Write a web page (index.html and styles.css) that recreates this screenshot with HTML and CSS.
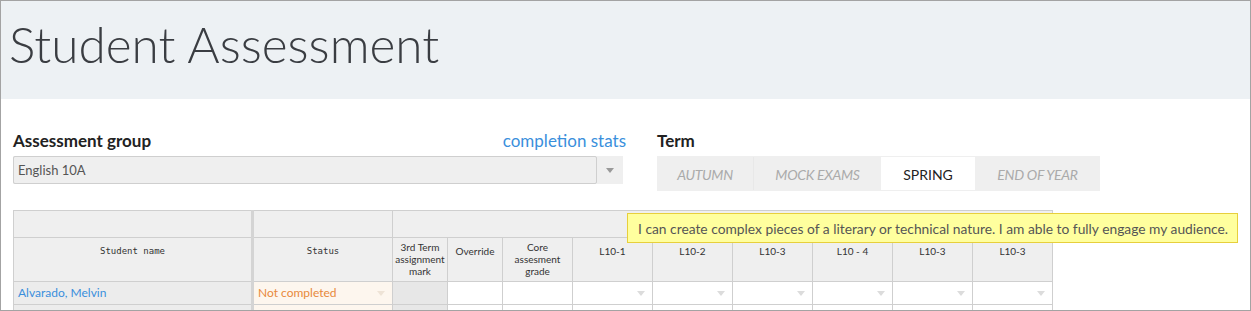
FILE: index.html
```html
<!DOCTYPE html>
<html lang="en">
<head>
    <meta charset="UTF-8">
    <title>Student Assessment</title>
    <link rel="stylesheet" href="styles.css">
</head>
<body>
    <div class="frame">
        <header class="page-header">
            <h1>Student Assessment</h1>
        </header>

        <section class="filters">
            <div class="group">
                <div class="label-row">
                    <span class="label">Assessment group</span>
                    <a class="stats-link" href="#">completion stats</a>
                </div>
                <div class="select">
                    <div class="select-value">English 10A</div>
                    <div class="select-arrow"><span class="caret"></span></div>
                </div>
            </div>
            <div class="term">
                <div class="label-row">
                    <span class="label">Term</span>
                </div>
                <div class="tabs">
                    <span class="tab autumn">AUTUMN</span>
                    <span class="tab mock">MOCK EXAMS</span>
                    <span class="tab spring active">SPRING</span>
                    <span class="tab year">END OF YEAR</span>
                </div>
            </div>
        </section>

        <section class="grid-wrap">
            <table class="grid">
                <colgroup>
                    <col style="width: 239px">
                    <col style="width: 140px">
                    <col style="width: 55px">
                    <col style="width: 55px">
                    <col style="width: 70px">
                    <col style="width: 80px">
                    <col style="width: 80px">
                    <col style="width: 80px">
                    <col style="width: 80px">
                    <col style="width: 80px">
                    <col style="width: 80px">
                </colgroup>
                <tr class="top-row">
                    <th></th>
                    <th class="thick"></th>
                    <th colspan="9"></th>
                </tr>
                <tr class="head-row">
                    <th class="mono">Student name</th>
                    <th class="mono thick">Status</th>
                    <th class="multi">3rd Term assignment mark</th>
                    <th>Override</th>
                    <th class="multi">Core assesment grade</th>
                    <th>L10-1</th>
                    <th>L10-2</th>
                    <th>L10-3</th>
                    <th>L10 - 4</th>
                    <th>L10-3</th>
                    <th>L10-3</th>
                </tr>
                <tr class="data-row">
                    <td class="name"><a href="#">Alvarado, Melvin</a></td>
                    <td class="status thick">Not completed<span class="caret"></span></td>
                    <td class="mark"></td>
                    <td></td>
                    <td></td>
                    <td class="pick"><span class="caret"></span></td>
                    <td class="pick"><span class="caret"></span></td>
                    <td class="pick"><span class="caret"></span></td>
                    <td class="pick"><span class="caret"></span></td>
                    <td class="pick"><span class="caret"></span></td>
                    <td class="pick"><span class="caret"></span></td>
                </tr>
                <tr class="data-row">
                    <td class="name"></td>
                    <td class="status thick"></td>
                    <td class="mark"></td>
                    <td></td><td></td><td></td><td></td><td></td><td></td><td></td><td></td>
                </tr>
            </table>

            <div class="tooltip">I can create complex pieces of a literary or technical nature. I am able to fully engage my audience.</div>
        </section>
    </div>
</body>
</html>
```

FILE: styles.css
```css
* {
    margin: 0;
    padding: 0;
    box-sizing: border-box;
}

body {
    font-family: 'Lato', sans-serif;
    color: #333;
    background-color: #fff;
}

.frame {
    width: 1251px;
    height: 311px;
    border: 1px solid #a3a3a3;
    overflow: hidden;
}

/* Header */
.page-header {
    background-color: #edf1f4;
    height: 98px;
    padding: 13px 0 0 8px;
}

.page-header h1 {
    font-size: 49.5px;
    font-weight: 300;
    color: #3a3d42;
    line-height: 60px;
}

/* Filters */
.filters {
    display: flex;
    gap: 30px;
    padding: 31px 0 0 12px;
}

.group {
    width: 614px;
}

.label-row {
    display: flex;
    justify-content: space-between;
    align-items: baseline;
    height: 26px;
}

.label {
    font-size: 17px;
    font-weight: 700;
    color: #222;
}

.stats-link {
    color: #3a8fdc;
    font-size: 17px;
    text-decoration: none;
    margin-right: 1px;
}

.select {
    display: flex;
    height: 28px;
    margin-right: 4px;
    background-color: #efefef;
}

.select-value {
    flex: 1;
    border: 1px solid #cfcfcf;
    border-radius: 2px;
    font-size: 13px;
    color: #555;
    padding: 5px 4px;
}

.select-arrow {
    width: 26px;
    display: flex;
    align-items: center;
    justify-content: center;
}

.caret {
    display: inline-block;
    width: 0;
    height: 0;
    border-left: 4px solid transparent;
    border-right: 4px solid transparent;
    border-top: 5px solid #999;
}

.tabs {
    display: flex;
    background-color: #efefef;
    width: 443px;
    height: 35px;
    padding: 1px 0;
}

.tab {
    flex-shrink: 0;
    white-space: nowrap;
    text-align: center;
    padding-top: 9px;
    font-size: 14px;
    font-style: italic;
    letter-spacing: -0.3px;
    color: #aaa;
}

.tab.autumn {
    width: 97px;
    border-right: 1px solid #e8e8e8;
}

.tab.mock {
    width: 127px;
}

.tab.spring {
    width: 94px;
}

.tab.year {
    width: 125px;
}

.tab.active {
    background-color: #fff;
    color: #222;
    font-style: normal;
    letter-spacing: 0;
}

/* Grid */
.grid-wrap {
    position: relative;
    padding: 19px 0 0 12px;
}

.grid {
    border-collapse: collapse;
    table-layout: fixed;
    width: 1039px;
}

.grid th,
.grid td {
    border: 1px solid #cfcfcf;
}

.grid th {
    background-color: #efefef;
    font-size: 10px;
    font-weight: 400;
    color: #333;
    vertical-align: top;
    line-height: 12px;
}

.top-row th {
    height: 26.5px;
}

.head-row th {
    height: 44px;
    padding-top: 7px;
}

.head-row th.multi {
    padding-top: 3px;
}

.grid th.mono {
    font-family: 'DejaVu Sans Mono', monospace;
    font-size: 9px;
}

.grid .thick {
    border-left: 3px solid #d4d4d4;
}

.data-row td {
    height: 23px;
    font-size: 12px;
    position: relative;
    padding: 0 4px;
}

.data-row td .caret {
    position: absolute;
    right: 7px;
    top: 9px;
    border-top-color: #dcdcdc;
}

.data-row .name {
    background-color: #ececec;
}

.data-row .name a {
    color: #3a8fdc;
    text-decoration: none;
}

.data-row .status {
    background-color: #fdf6ee;
    color: #e8893b;
}

.data-row .status .caret {
    border-top-color: #eee3d6;
}

.data-row .mark {
    background-color: #e7e7e7;
}

.tooltip {
    position: absolute;
    left: 626px;
    top: 22px;
    width: 611px;
    height: 30px;
    background-color: #ffff9e;
    border: 1px solid #e7cf3c;
    font-size: 13.8px;
    color: #555;
    padding: 6px 0 0 10px;
    white-space: nowrap;
}
```
